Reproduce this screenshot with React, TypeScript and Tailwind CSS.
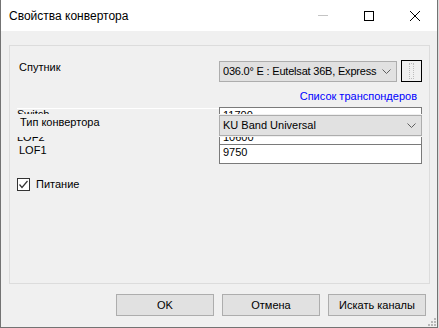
import React from "react";

function Chevron() {
  return (
    <svg width="9" height="6" viewBox="0 0 9 6" className="shrink-0">
      <polyline points="0.5,0.5 4.5,4.5 8.5,0.5" fill="none" stroke="#5f5f5f" strokeWidth="1" />
    </svg>
  );
}

export default function App() {
  return (
    <div className="w-[439px] h-[328px] bg-[#dcdcdc] font-['Liberation_Sans',Arial,sans-serif] text-[11px] text-black">
      <div className="relative w-[438px] h-[328px] flex flex-col bg-[#f0f0f0] border-x border-b border-[#737373]">
        {/* Title bar */}
        <div className="h-[31px] shrink-0 bg-white flex items-center">
          <span className="ml-[8px] text-[12px] leading-[16px] text-black">Свойства конвертора</span>
          <div className="ml-auto flex items-center pr-[17px]">
            <div className="w-[10px] h-px bg-[#c4c4c4]" />
            <div className="ml-[36px] w-[10px] h-[10px] border border-black" />
            <svg width="10" height="10" viewBox="0 0 10 10" className="ml-[36px]">
              <line x1="0" y1="0" x2="10" y2="10" stroke="black" strokeWidth="1" />
              <line x1="10" y1="0" x2="0" y2="10" stroke="black" strokeWidth="1" />
            </svg>
          </div>
        </div>

        {/* Group box */}
        <div className="ml-[8px] mt-[14px] w-[421px] h-[239px] border border-[#dcdcdc] flex flex-col">
          {/* Satellite row */}
          <div className="mt-[14px] flex items-start h-[22px]">
            <div className="w-[209px] pl-[9px] leading-[14px]">Спутник</div>
            <div className="mt-[1px] w-[178px] h-[21px] bg-[#e1e1e1] border border-[#adadad] flex items-center pl-[3px] pr-[5px]">
              <span className="flex-1 tracking-[-0.2px] whitespace-nowrap overflow-hidden">036.0° E : Eutelsat 36B, Express</span>
              <Chevron />
            </div>
            <div className="ml-[4px] w-[21px] h-[22px] border border-black bg-[#f0f0f0] flex items-center justify-center">
              <div className="w-[5px] h-[16px] border border-dotted border-[#bdbdbd]" />
            </div>
          </div>

          {/* Link row */}
          <div className="mt-[7px] h-[14px] flex">
            <div className="w-[209px]" />
            <div className="w-[203px] pr-[5px] text-right leading-[14px] text-[#0000ff] whitespace-nowrap">Список транспондеров</div>
          </div>

          {/* Overlapping LNB region */}
          <div className="relative mt-[4px] h-[57px] flex flex-col">
            <div className="h-[18px] flex">
              <div className="w-[209px] pl-[7px]">
                <div className="mt-[1px] border-t border-white leading-[10px]">Switch</div>
              </div>
              <div className="w-[203px] h-[18px] border-t border-x border-[#7a7a7a] bg-white pl-[3px] leading-[10px] pt-[2px]">11700</div>
            </div>
            <div className="h-[19px] flex">
              <div className="w-[209px] pl-[7px] pt-[6px] leading-[13px]">LOF2</div>
              <div className="w-[203px] h-[19px] border-x border-[#7a7a7a] bg-white pl-[3px] pt-[6px] leading-[13px]">10600</div>
            </div>
            <div className="h-[20px] flex">
              <div className="w-[209px] pl-[9px] leading-[13px]">LOF1</div>
              <div className="w-[203px] h-[20px] border border-[#7a7a7a] bg-white pl-[3px] pt-[1px] leading-[13px]">9750</div>
            </div>

            {/* Overlay row */}
            <div className="absolute left-0 top-[7px] w-[419px] h-[23px] bg-[#f0f0f0] flex items-start">
              <div className="w-[209px] pl-[10px] pt-[2px] leading-[13px]">Тип конвертора</div>
              <div className="mt-[1px] w-[203px] h-[21px] bg-[#e1e1e1] border border-[#adadad] flex items-center pl-[3px] pr-[5px]">
                <span className="flex-1">KU Band Universal</span>
                <Chevron />
              </div>
            </div>
          </div>

          {/* Checkbox row */}
          <div className="mt-[14px] ml-[7px] flex items-center h-[13px]">
            <div className="w-[13px] h-[13px] border border-[#333333] bg-white flex items-center justify-center">
              <svg width="11" height="11" viewBox="0 0 11 11">
                <polyline points="1.5,5.5 4,8.5 9.5,2" fill="none" stroke="#333333" strokeWidth="1.2" />
              </svg>
            </div>
            <span className="ml-[6px] leading-[13px]">Питание</span>
          </div>
        </div>

        {/* Buttons */}
        <div className="mt-[10px] flex justify-end gap-[8px] pr-[11px]">
          <div className="w-[98px] h-[22px] bg-[#e1e1e1] border border-[#adadad] flex items-center justify-center">OK</div>
          <div className="w-[98px] h-[22px] bg-[#e1e1e1] border border-[#adadad] flex items-center justify-center">Отмена</div>
          <div className="w-[98px] h-[22px] bg-[#e1e1e1] border border-[#adadad] flex items-center justify-center">Искать каналы</div>
        </div>

        {/* Resize grip */}
        <svg width="9" height="9" viewBox="0 0 9 9" className="absolute right-[1px] bottom-[1px]">
          <rect x="7" y="1" width="2" height="2" fill="#b8b8b8" />
          <rect x="4" y="4" width="2" height="2" fill="#b8b8b8" />
          <rect x="7" y="4" width="2" height="2" fill="#b8b8b8" />
          <rect x="1" y="7" width="2" height="2" fill="#b8b8b8" />
          <rect x="4" y="7" width="2" height="2" fill="#b8b8b8" />
          <rect x="7" y="7" width="2" height="2" fill="#b8b8b8" />
        </svg>
      </div>
    </div>
  );
}
